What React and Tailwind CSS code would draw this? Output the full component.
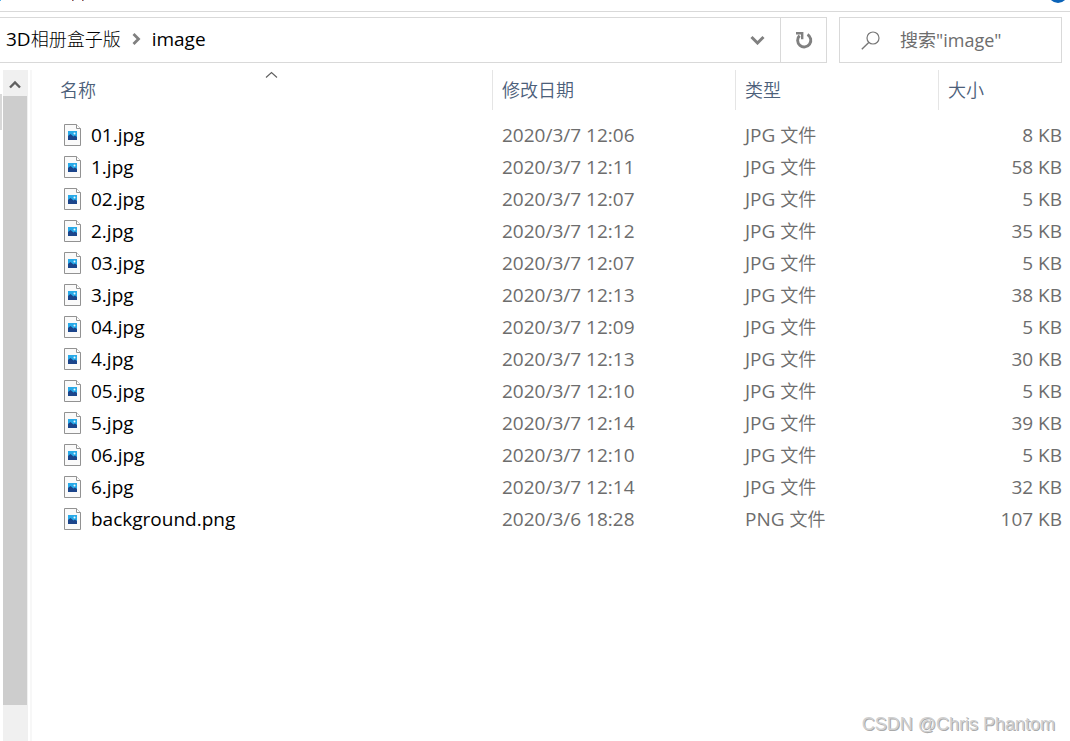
const files = [
  ['01.jpg', '2020/3/7 12:06', 'JPG', '8 KB'],
  ['1.jpg', '2020/3/7 12:11', 'JPG', '58 KB'],
  ['02.jpg', '2020/3/7 12:07', 'JPG', '5 KB'],
  ['2.jpg', '2020/3/7 12:12', 'JPG', '35 KB'],
  ['03.jpg', '2020/3/7 12:07', 'JPG', '5 KB'],
  ['3.jpg', '2020/3/7 12:13', 'JPG', '38 KB'],
  ['04.jpg', '2020/3/7 12:09', 'JPG', '5 KB'],
  ['4.jpg', '2020/3/7 12:13', 'JPG', '30 KB'],
  ['05.jpg', '2020/3/7 12:10', 'JPG', '5 KB'],
  ['5.jpg', '2020/3/7 12:14', 'JPG', '39 KB'],
  ['06.jpg', '2020/3/7 12:10', 'JPG', '5 KB'],
  ['6.jpg', '2020/3/7 12:14', 'JPG', '32 KB'],
  ['background.png', '2020/3/6 18:28', 'PNG', '107 KB'],
];

function FileIcon() {
  return (
    <svg className="shrink-0" width="18" height="22" viewBox="0 0 18 22" fill="none" aria-hidden="true">
      <path d="M.5.5h12l4 4v17H.5z" fill="#fafafa" stroke="#929292" />
      <path d="M12.5.5v4h4" fill="#fff" stroke="#929292" />
      <path d="M4 7h9v9H4z" fill="#27a9e8" />
      <circle cx="10.5" cy="9.5" r="1" fill="#e8f8ff" />
      <path d="M4 12l2.5-2 3 2.5L11 11.5l2 1.5v3H4z" fill="#1b458b" />
    </svg>
  );
}

function TopEdge() {
  return (
    <div className="flex h-3 shrink-0 items-start justify-between border-b border-[#d9d9d9]">
      <svg width="100" height="4" viewBox="0 0 100 4" aria-hidden="true">
        <path d="M0 0h1v1H0z" fill="#55b4ee" />
        <path d="M72 0h1v1h-1zM82 0h1v1h-1z" fill="#b4533a" />
        <path d="M73 0h1v1h-1zM83 0h1v1h-1z" fill="#7f9fc4" />
      </svg>
      <svg width="22" height="4" viewBox="0 0 22 4" aria-hidden="true">
        <circle cx="10" cy="-7" r="10" fill="#0b63b8" />
      </svg>
    </div>
  );
}

function AddressBar() {
  return (
    <div className="flex shrink-0 gap-3 pt-[5px] pr-2">
      <nav aria-label="地址" className="flex h-[46px] min-w-0 grow border-y border-r border-[#d9d9d9]">
        <div className="flex grow items-center pb-0.5 pl-[6px] text-black">
          <a href="#parent" className="font-light"><span className="text-[19px] font-normal">3D</span>相册盒子版</a>
          <svg className="mx-[11px]" width="9" height="12" viewBox="0 0 9 12" fill="none" aria-hidden="true">
            <path d="M1.5 1l5 5-5 5" stroke="#808080" strokeWidth="2.8" />
          </svg>
          <a href="#image" className="text-[19px]">image</a>
        </div>
        <button type="button" aria-label="以前的位置" className="flex w-[45px] items-center justify-center">
          <svg width="15" height="10" viewBox="0 0 15 10" fill="none" aria-hidden="true">
            <path d="M1.5 2l6 6 6-6" stroke="#808080" strokeWidth="3" />
          </svg>
        </button>
        <button type="button" aria-label="刷新" className="flex w-[46px] items-center justify-center border-l border-[#d9d9d9]">
          <svg width="18" height="18" viewBox="0 0 18 18" fill="none" aria-hidden="true">
            <path d="M12.5 3.6A6.6 6.6 0 1 1 4.6 4.6" stroke="#808080" strokeWidth="2.9" />
            <path d="M1 2.2h6.2v6" stroke="#808080" strokeWidth="2.4" />
          </svg>
        </button>
      </nav>
      <label className="flex h-[46px] w-[223px] shrink-0 items-center gap-5 border border-[#d9d9d9] pl-[21px]">
        <svg className="shrink-0" width="19" height="19" viewBox="0 0 19 19" fill="none" aria-hidden="true">
          <circle cx="12" cy="7" r="6" stroke="#777" strokeWidth="1.2" />
          <path d="M8 11.2L.8 18.3" stroke="#777" strokeWidth="1.4" />
        </svg>
        <input type="text" aria-label="搜索" placeholder={'搜索"image"'} className="w-full min-w-0 text-[18px] outline-none placeholder:text-[#6d6d6d]" />
      </label>
    </div>
  );
}

function ScrollBar() {
  return (
    <div className="flex w-8 shrink-0 gap-px border-r-2 border-[#f7f7f7]">
      <div className="mt-[24px] h-9 w-[2px] bg-[#d9d9d9]" />
      <div className="flex w-[25px] flex-col bg-[#f0f0f0] pr-px">
        <button type="button" aria-label="向上滚动" className="flex h-[26px] shrink-0 items-center justify-center pt-[3px]">
          <svg width="12" height="9" viewBox="0 0 12 9" fill="none" aria-hidden="true">
            <path d="M1 7.5l5-5 5 5" stroke="#606060" strokeWidth="2.4" />
          </svg>
        </button>
        <div className="grow-[609] bg-[#cdcdcd]" />
        <div className="grow-[36]" />
      </div>
    </div>
  );
}

function FileTable() {
  return (
    <table className="w-full table-fixed border-collapse text-left text-[#6d6d6d]">
      <colgroup>
        <col />
        <col className="w-[243px]" />
        <col className="w-[203px]" />
        <col className="w-[131px]" />
      </colgroup>
      <thead className="text-[#4c607a]">
        <tr className="h-10">
          <th className="p-0 font-[350]">
            <div className="flex h-10">
              <span className="grow basis-0 pt-[7px] pl-7">名称</span>
              <svg className="mt-px" width="13" height="8" viewBox="0 0 13 8" fill="none" aria-label="升序">
                <path d="M1 6.5l5.5-5 5.5 5" stroke="#606060" strokeWidth="1.1" />
              </svg>
              <span className="grow basis-0 border-r border-[#e5e5e5] pr-[10px]" />
            </div>
          </th>
          <th className="p-0 font-[350]"><div className="h-10 border-r border-[#e5e5e5] pt-[7px] pl-[9px]">修改日期</div></th>
          <th className="p-0 font-[350]"><div className="h-10 border-r border-[#e5e5e5] pt-[7px] pl-[9px]">类型</div></th>
          <th className="p-0 font-[350]"><div className="h-10 pt-[7px] pl-[9px]">大小</div></th>
        </tr>
        <tr className="h-[9px]" aria-hidden="true" />
      </thead>
      <tbody className="text-[19px]">
        {files.map(([name, date, type, size]) => (
          <tr key={name} className="h-8">
            <td className="p-0 pl-8 text-black">
              <a href={'#' + name} className="flex items-center gap-[9px]"><FileIcon />{name}</a>
            </td>
            <td className="p-0 pl-[9px]">{date}</td>
            <td className="p-0 pl-[9px]">{type} <span className="text-[18px] font-[350]">文件</span></td>
            <td className="p-0 pr-2 text-right">{size}</td>
          </tr>
        ))}
      </tbody>
    </table>
  );
}

export default function App() {
  return (
    <div className="relative flex min-h-screen flex-col bg-white font-['Open_Sans','Noto_Sans_CJK_SC',sans-serif] text-[18px] leading-[26px]">
      <TopEdge />
      <AddressBar />
      <main className="flex grow pt-[7px]">
        <ScrollBar />
        <div className="min-w-0 grow"><FileTable /></div>
      </main>
      <div className="absolute right-[15px] bottom-1 font-['Liberation_Sans',sans-serif] text-[#d0d0d0] [text-shadow:1px_1px_0_#aaa]">CSDN @Chris Phantom</div>
    </div>
  );
}
